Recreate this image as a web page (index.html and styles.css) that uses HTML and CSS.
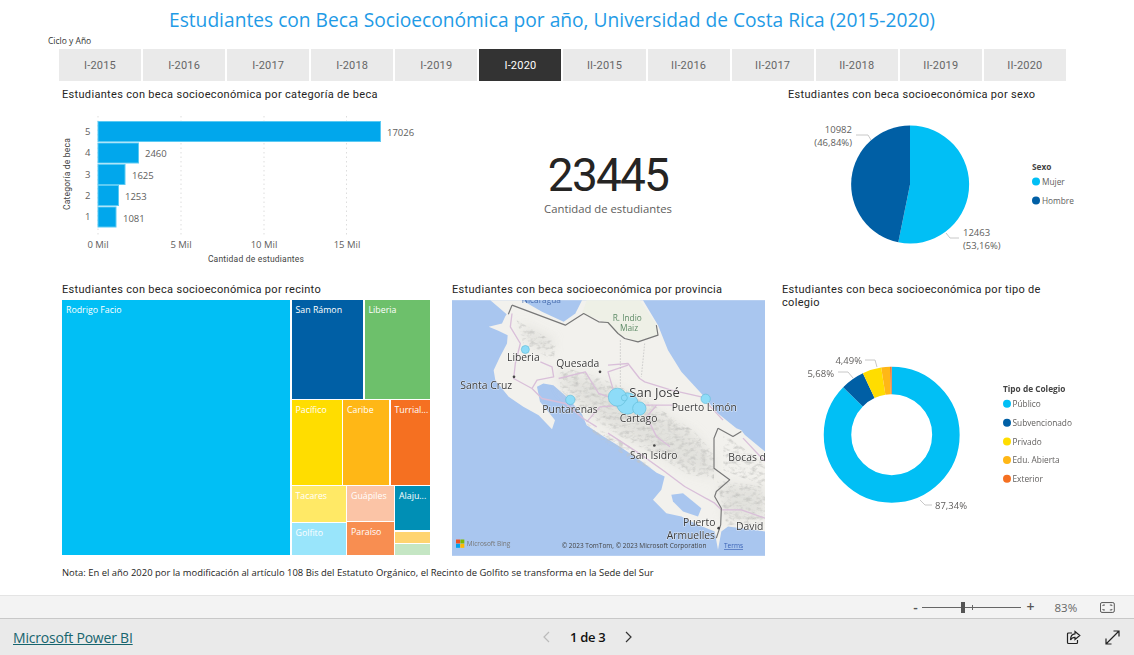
FILE: index.html
```html
<!DOCTYPE html>
<html lang="es">
<head>
<meta charset="utf-8">
<title>Estudiantes con Beca Socioeconómica</title>
<link rel="stylesheet" href="styles.css">
</head>
<body>
<main class="report">
  <h1 class="report-title">Estudiantes con Beca Socioeconómica por año, Universidad de Costa Rica (2015-2020)</h1>
  <div class="slicer-label">Ciclo y Año</div>
  <div class="slicer">
    <div class="chip">I-2015</div><div class="chip">I-2016</div><div class="chip">I-2017</div><div class="chip">I-2018</div><div class="chip">I-2019</div><div class="chip active">I-2020</div>
    <div class="chip">II-2015</div><div class="chip">II-2016</div><div class="chip">II-2017</div><div class="chip">II-2018</div><div class="chip">II-2019</div><div class="chip">II-2020</div>
  </div>

  <section class="row row-top">
    <div class="panel bars">
      <h2 class="visual-title">Estudiantes con beca socioeconómica por categoría de beca</h2>
      <svg class="chart" width="440" height="165" viewBox="62 105 440 165">
        <g class="grid"><line x1="98" y1="115" x2="98" y2="235"/><line x1="181" y1="115" x2="181" y2="235"/><line x1="264" y1="115" x2="264" y2="235"/><line x1="346.500" y1="115" x2="346.500" y2="235"/></g>
        <g class="bar">
          <rect x="98" y="120.500" width="282.500" height="20"/>
          <rect x="98" y="142" width="40.500" height="20"/>
          <rect x="98" y="163.500" width="27" height="20"/>
          <rect x="98" y="184.500" width="20.500" height="20"/>
          <rect x="98" y="206" width="18" height="20"/>
        </g>
        <g class="t-axis">
          <text x="387" y="135">17026</text><text x="145" y="156">2460</text><text x="132" y="178">1625</text><text x="125" y="199">1253</text><text x="123" y="221">1081</text>
          <text x="85" y="134">5</text><text x="85" y="155">4</text><text x="85" y="177">3</text><text x="85" y="198">2</text><text x="85" y="219">1</text>
        </g>
        <g class="t-axis t-mid"><text x="98" y="247">0 Mil</text><text x="181" y="247">5 Mil</text><text x="264" y="247">10 Mil</text><text x="347" y="247">15 Mil</text></g>
        <text class="t-axis-title t-mid" x="256" y="261">Cantidad de estudiantes</text>
        <text class="t-axis-title t-mid" transform="translate(70 173) rotate(-90)">Categoría de beca</text>
      </svg>
    </div>
    <div class="kpi">
      <div class="kpi-value">23445</div>
      <div class="kpi-label">Cantidad de estudiantes</div>
    </div>
    <div class="panel sex">
      <h2 class="visual-title">Estudiantes con beca socioeconómica por sexo</h2>
      <svg class="chart" width="302" height="165" viewBox="788 105 302 165">
        <path class="c-blue" d="M910 184.500V125.500A59 59 0 1 1 898.300 242.300Z"/>
        <path class="c-navy" d="M910 184.500L898.300 242.300A59 59 0 0 1 910 125.500Z"/>
        <polyline class="leader" points="856,135 868,135 871,140"/>
        <polyline class="leader" points="946,233 950,238 959,238"/>
        <g class="t-axis">
          <text class="t-end" x="852" y="133">10982</text><text class="t-end" x="852" y="146">(46,84%)</text>
          <text x="963" y="236">12463</text><text x="963" y="249">(53,16%)</text>
        </g>
        <g class="t-legend">
          <text class="t-legend-title" x="1032" y="170">Sexo</text>
          <circle class="c-blue" cx="1036" cy="181.500" r="4"/><text x="1042" y="185">Mujer</text>
          <circle class="c-navy" cx="1036" cy="200.500" r="4"/><text x="1042" y="204">Hombre</text>
        </g>
      </svg>
    </div>
  </section>

  <section class="row row-bottom">
    <div class="panel tm-panel">
      <h2 class="visual-title">Estudiantes con beca socioeconómica por recinto</h2>
      <div class="treemap">
        <div class="cell big c1">Rodrigo Facio</div>
        <div class="tm-right">
          <div class="tm-row r1"><div class="cell w-san c2">San Rámon</div><div class="cell grow c3">Liberia</div></div>
          <div class="tm-row r2"><div class="cell w-pac c4">Pacífico</div><div class="cell w-car c5">Caribe</div><div class="cell grow c6">Turrial...</div></div>
          <div class="tm-row r3">
            <div class="tm-col w-tac"><div class="cell h-tac c7">Tacares</div><div class="cell grow c8">Golfito</div></div>
            <div class="tm-col w-gua"><div class="cell h-gua c9">Guápiles</div><div class="cell grow c10">Paraíso</div></div>
            <div class="tm-col grow"><div class="cell h-ala c11">Alaju...</div><div class="cell h-sm c12"></div><div class="cell grow c13"></div></div>
          </div>
        </div>
      </div>
    </div>
    <div class="panel map-panel">
      <h2 class="visual-title">Estudiantes con beca socioeconómica por provincia</h2>
      <svg class="map" width="313" height="256" viewBox="36 30 939 767">
        <defs>
          <filter id="shade" x="0" y="0" width="100%" height="100%">
            <feTurbulence type="fractalNoise" baseFrequency="0.06 0.09" numOctaves="4" seed="11" result="n"/>
            <feColorMatrix in="n" type="matrix" values="0 0 0 0 .55  0 0 0 0 .55  0 0 0 0 .53  2 0 0 0 -.9" result="g"/>
            <feComposite in="g" in2="SourceAlpha" operator="in" result="c"/>
            <feGaussianBlur in="c" stdDeviation="1.800"/>
          </filter>
          <filter id="soft"><feGaussianBlur stdDeviation="16"/></filter>
          <filter id="edge"><feGaussianBlur stdDeviation="6"/></filter>
        </defs>
        <rect class="sea" x="36" y="30" width="939" height="767"/>
        <path class="land" d="M151 30L180 55 200 72 196 78 186 100 146 110 175 122 203 135 201 160 180 200 161 240 166 270 206 320 250 350 296 375 336 417 345 390 325 365 300 335 291 290 310 280 340 285 380 320 425 370 440 405 480 432 540 470 600 510 650 548 674 559 664 599 639 629 679 669 724 679 774 704 824 724 834 779 844 724 864 709 975 724V484L914 434 904 420 889 414 834 370 784 310 724 245 684 180 654 105 609 30Z"/>
        <path class="sea" d="M246 30L306 65 371 95 406 70 426 30Z"/>
        <path class="sea" d="M694 614L729 609 784 654 774 679 729 664 699 634Z"/>
        <path class="nature" d="M510 30H600L650 105 654 135 594 155 534 130 500 97 470 85 426 70 440 30Z"/>
        <g class="hills" filter="url(#soft)">
          <path d="M350 240L440 260 520 290 600 330 680 380 760 430 820 500 820 560 740 540 640 480 560 440 480 390 420 340 370 290Z"/>
          <path d="M835 580L975 590V680L860 690Z"/>
          <path d="M240 100L340 150 330 190 260 150Z"/>
        </g>
        <g filter="url(#shade)">
          <path d="M360 230L440 250 520 280 600 320 680 370 760 420 822 490 822 570 740 550 640 490 560 450 480 400 420 350 360 300Z"/>
          <path d="M830 570L975 590V700L860 705Z"/>
          <path d="M230 90L350 160 340 210 250 160Z"/>
          <path d="M440 400L560 460 640 540 560 500 470 440Z"/>
          <path d="M850 430L975 520V590L850 540Z"/>
        </g>
        <g class="roads">
          <polyline points="216,70 211,110 241,160 226,220 221,265 276,295 306,325 376,340 430,385 470,410"/>
          <polyline points="301,215 336,230 341,260 291,270 276,295"/>
          <polyline points="356,265 436,245 476,310 506,320"/>
          <polyline points="504,225 564,220 599,265 614,275 694,300 784,320 849,390"/>
          <polyline points="564,225 504,245 520,300"/>
          <polyline points="504,429 604,494 674,544 734,589 824,639 844,659 904,659 975,684"/>
          <polyline points="909,444 975,514"/>
          <polyline points="650,345 620,380 650,440 690,470"/>
          <polyline points="440,395 480,350 550,345 640,345 700,345"/>
        </g>
        <polyline class="dash" points="541,150 541,300"/>
        <polyline class="dash" points="614,160 604,260"/>
        <polyline class="border" points="216,45 376,105 431,70 476,95 504,97 534,130 554,145 594,155 654,135 649,105"/>
        <polyline class="border" points="216,45 205,72"/>
        <polyline class="border" points="834,414 879,439 904,424"/>
        <polyline class="border" points="834,414 822,444 822,534 869,569 829,604 824,619 844,654 842,704 829,744"/>
        <g class="dots"><circle cx="222" cy="260" r="4"/><circle cx="480" cy="245" r="4"/><circle cx="643" cy="466" r="4"/><circle cx="836" cy="714" r="4"/></g>
        <g class="bubbles">
          <circle cx="256" cy="178" r="12"/><circle cx="391" cy="329" r="14"/><circle cx="797" cy="326" r="14"/>
          <circle cx="562" cy="340" r="32"/><circle cx="532" cy="321" r="27"/><circle cx="598" cy="355" r="20"/><circle cx="553" cy="323" r="9"/>
        </g>
        <g class="place">
          <text x="201" y="214">Liberia</text><text x="349" y="231">Quesada</text><text x="61" y="297">Santa Cruz</text>
          <text x="307" y="369">Puntarenas</text><text class="place-lg" x="568" y="322">San José</text><text x="695" y="364">Puerto Limón</text>
          <text x="539" y="395">Cartago</text><text x="570" y="508">San Isidro</text><text x="865" y="512">Bocas del</text>
          <text x="729" y="708">Puerto</text><text x="680" y="746">Armuelles</text><text x="888" y="721">David</text>
        </g>
        <text class="place-green" x="518" y="92">R. Indio</text><text class="place-green" x="540" y="122">Maiz</text>
        <text class="place-blue" x="245" y="40">Nicaragua</text>
        <g><rect class="ms-r" x="48" y="748" width="12" height="12"/><rect class="ms-g" x="61" y="748" width="12" height="12"/><rect class="ms-b" x="48" y="761" width="12" height="12"/><rect class="ms-y" x="61" y="761" width="12" height="12"/></g>
        <text class="attr" x="80" y="767">Microsoft Bing</text>
        <text class="attr attr-dark" x="365" y="774">© 2023 TomTom, © 2023 Microsoft Corporation</text>
        <text class="attr attr-link" x="852" y="774">Terms</text>
      </svg>
    </div>
    <div class="panel school">
      <h2 class="visual-title">Estudiantes con beca socioeconómica por tipo de colegio</h2>
      <svg class="chart" width="310" height="245" viewBox="782 311 310 245">
        <g class="donut">
          <circle class="d1" cx="891.700" cy="434.700" r="54.200" pathLength="100" stroke-dasharray="87.340 100"/>
          <circle class="d2" cx="891.700" cy="434.700" r="54.200" pathLength="100" stroke-dasharray="5.680 100" stroke-dashoffset="-87.340"/>
          <circle class="d3" cx="891.700" cy="434.700" r="54.200" pathLength="100" stroke-dasharray="4.490 100" stroke-dashoffset="-93.020"/>
          <circle class="d4" cx="891.700" cy="434.700" r="54.200" pathLength="100" stroke-dasharray="2.090 100" stroke-dashoffset="-97.510"/>
          <circle class="d5" cx="891.700" cy="434.700" r="54.200" pathLength="100" stroke-dasharray="0.400 100" stroke-dashoffset="-99.600"/>
        </g>
        <polyline class="leader" points="865,360 875,360 877,367"/>
        <polyline class="leader" points="838,372 848,372 853,378"/>
        <polyline class="leader" points="920,500 925,505 932,505"/>
        <g class="t-axis">
          <text class="t-end" x="862" y="364">4,49%</text><text class="t-end" x="834" y="377">5,68%</text><text x="935" y="509">87,34%</text>
        </g>
        <g class="t-legend">
          <text class="t-legend-title" x="1003" y="392">Tipo de Colegio</text>
          <circle class="c-blue" cx="1007" cy="403.700" r="4"/><text x="1012.500" y="407">Público</text>
          <circle class="c-navy" cx="1007" cy="422.700" r="4"/><text x="1012.500" y="426">Subvencionado</text>
          <circle class="c-yellow" cx="1007" cy="441.500" r="4"/><text x="1012.500" y="445">Privado</text>
          <circle class="c-amber" cx="1007" cy="460" r="4"/><text x="1012.500" y="463">Edu. Abierta</text>
          <circle class="c-orange" cx="1007" cy="478.800" r="4"/><text x="1012.500" y="482">Exterior</text>
        </g>
      </svg>
    </div>
  </section>
  <p class="note">Nota: En el año 2020 por la modificación al artículo 108 Bis del Estatuto Orgánico, el Recinto de Golfito se transforma en la Sede del Sur</p>
</main>

<div class="zoombar">
  <span class="zoom-sign">-</span>
  <div class="slider"><span class="tick"></span><span class="thumb"></span></div>
  <span class="zoom-sign">+</span>
  <span class="zoom-pct">83%</span>
  <svg class="fit" width="15" height="11" viewBox="0 0 15 11"><rect x=".5" y=".5" width="14" height="10" rx="1.500"/><path d="M3 4V3H5M10 3H12V4M12 7V8H10M5 8H3V7"/></svg>
</div>
<footer class="footer">
  <a class="brand" href="#">Microsoft Power BI</a>
  <div class="pager">
    <svg class="chev off" width="8" height="12" viewBox="0 0 8 12"><path d="M7 1L2 6 7 11"/></svg>
    <span class="page">1 de 3</span>
    <svg class="chev" width="8" height="12" viewBox="0 0 8 12"><path d="M1 1L6 6 1 11"/></svg>
  </div>
  <div class="actions">
    <svg class="act" width="15" height="15" viewBox="0 0 15 15"><path d="M6 3H2.500A1 1 0 0 0 1.500 4V12.500A1 1 0 0 0 2.500 13.500H10.500A1 1 0 0 0 11.500 12.500V10"/><path d="M9 1.500L13.800 5.500 9 9.500V7.300C7 7.300 5.500 8 4.500 10 4.500 7 6 4 9 3.800Z"/></svg>
    <svg class="act" width="15" height="15" viewBox="0 0 15 15"><path d="M1 14L14 1M8.500 1H14V6.500M1 8.500V14H6.500"/></svg>
  </div>
</footer>
</body>
</html>
```
FILE: styles.css
```css
* { box-sizing: border-box; }
html, body { margin: 0; height: 655px; overflow: hidden; background: #fff; }
body { font-family: "Open Sans", "Noto Sans", sans-serif; color: #252423; }

.report { height: 595px; padding-top: 6px; }
.report-title { margin: 0; font-size: 19.200px; line-height: 27px; font-weight: 400; text-align: center; padding-right: 30px; color: #1f9be6; white-space: nowrap; }
.slicer-label { margin: 3px 0 0 48px; font-size: 8.500px; line-height: 10px; color: #333; }
.slicer { display: grid; grid-template-columns: repeat(12, 82.080px); column-gap: 2px; margin: 3px 0 0 59px; }
.chip { height: 32px; display: flex; align-items: center; justify-content: center; background: #eaeaea; color: #666; font: 11px "Roboto", sans-serif; letter-spacing: .2px; }
.chip.active { background: #333; color: #fff; }

.row { display: flex; padding-left: 62px; }
.row-top { height: 199px; padding-top: 7px; }
.row-bottom { margin-top: 3px; }
.panel { display: flex; flex-direction: column; min-width: 0; }
.visual-title { margin: 0; font: 400 11px/13px "Roboto", sans-serif; letter-spacing: .32px; color: #252423; }
.chart { display: block; }

.bars { width: 440px; }
.bars .chart { margin-top: 5px; }
.kpi { width: 212px; padding-top: 64px; text-align: center; }
.kpi-value { font: 400 46px/46px "Roboto", sans-serif; letter-spacing: -1.800px; color: #252423; }
.kpi-label { margin-top: 3px; font-size: 11.300px; line-height: 16px; color: #605e5d; }
.sex { width: 302px; margin-left: 74px; }
.sex .chart { margin-top: 4px; }

.tm-panel { width: 367.500px; }
.map-panel { width: 313px; margin-left: 22.500px; }
.school { width: 310px; margin-left: 17px; }
.school .visual-title { width: 290px; }
.tm-panel .visual-title, .map-panel .visual-title { margin-bottom: 4px; }
.school .chart { margin-top: 2px; }
.map { display: block; }

.treemap { display: flex; gap: 1.500px; height: 255px; }
.tm-right { flex: 1; display: flex; flex-direction: column; gap: 1.500px; min-width: 0; }
.tm-row { display: flex; gap: 1.500px; }
.r1 { height: 98.500px; }
.r2 { height: 84.500px; }
.r3 { flex: 1; min-height: 0; }
.tm-col { display: flex; flex-direction: column; gap: 1.500px; }
.cell { padding: 4px 4px; font-size: 8.800px; line-height: 12px; color: #fff; overflow: hidden; white-space: nowrap; }
.big { width: 228px; }
.grow { flex: 1; min-width: 0; min-height: 0; }
.w-san { width: 71.500px; }
.w-pac { width: 50px; }
.w-car { width: 46px; }
.w-tac { width: 54px; }
.w-gua { width: 46.500px; }
.h-tac { height: 35.500px; }
.h-gua { height: 34.500px; }
.h-ala { height: 44px; }
.h-sm { height: 11px; }
.c1 { background: #01bff5; }
.c2 { background: #005fa5; }
.c3 { background: #6dc06b; }
.c4 { background: #ffdd00; }
.c5 { background: #ffb716; }
.c6 { background: #f57021; }
.c7 { background: #ffe966; }
.c8 { background: #99e5fb; }
.c9 { background: #fbc4a6; }
.c10 { background: #f88e51; }
.c11 { background: #008fb5; }
.c12 { background: #ffd470; }
.c13 { background: #c5e6c4; }

.note { margin: 10px 0 0 62px; font-size: 9.430px; line-height: 14px; color: #252423; white-space: nowrap; }

/* chart parts */
.grid line { stroke: #ddd; stroke-width: 1; stroke-dasharray: 1.500 3; }
.bar rect { fill: #01a7ec; stroke: #5ccaf3; stroke-width: 1; }
.t-axis text { font-size: 9.500px; fill: #605e5d; }
.t-legend text { font-size: 8.300px; fill: #605e5d; }
.t-legend .t-legend-title { font-size: 8.300px; font-weight: 700; fill: #444; }
.t-axis-title { font-size: 8.500px; fill: #444; font-family: "Roboto", sans-serif; letter-spacing: .2px; }
.t-mid text, text.t-mid { text-anchor: middle; }
.t-axis text.t-end { text-anchor: end; }
.c-blue { fill: #01bff5; }
.c-navy { fill: #005fa5; }
.c-yellow { fill: #ffdd00; }
.c-amber { fill: #ffb716; }
.c-orange { fill: #f57021; }
.leader { fill: none; stroke: #c8c8c8; stroke-width: 1; }
.donut circle { fill: none; stroke-width: 27.500; transform: rotate(-90deg); transform-origin: 891.700px 434.700px; }
.d1 { stroke: #01bff5; }
.d2 { stroke: #005fa5; }
.d3 { stroke: #ffdd00; }
.d4 { stroke: #ffb716; }
.d5 { stroke: #f57021; }

/* map */
.sea { fill: #a9c6ef; }
.land { fill: #f2f1ed; }
.nature { fill: #eef0e6; }
.hills path { fill: #d6d5d0; opacity: .55; }
.roads polyline { fill: none; stroke: #d9bfd9; stroke-width: 4; stroke-linejoin: round; }
.dash { fill: none; stroke: #bcbcbc; stroke-width: 2; stroke-dasharray: 5 4; }
.border { fill: none; stroke: #777; stroke-width: 3.500; stroke-linejoin: round; }
.dots circle { fill: #444; }
.bubbles circle { fill: #8edcf8; stroke: #62bcd8; stroke-width: 2; }
.place text { font-size: 31px; fill: #3c3c3c; stroke: #fff; stroke-width: 3px; paint-order: stroke; stroke-opacity: .6; }
.place .place-lg { font-size: 39px; }
.place-green { font-size: 25px; fill: #5d8a66; }
.place-blue { font-size: 25px; fill: #4a6fb0; }
.attr { font-size: 19.500px; fill: #777; }
.attr-dark { fill: #444; }
.attr-link { fill: #3a62b5; text-decoration: underline; }
.ms-r { fill: #f25022; }
.ms-g { fill: #7fba00; }
.ms-b { fill: #00a4ef; }
.ms-y { fill: #ffb900; }

/* zoom bar */
.zoombar { height: 24px; display: flex; align-items: center; padding: 0 19px 0 912px; background: #f3f3f3; border-top: 1px solid #e4e4e4; border-bottom: 1px solid #c8c8c8; color: #555; }
.zoom-sign { width: 7px; font-size: 14px; line-height: 20px; font-weight: 600; text-align: center; }
.slider { position: relative; width: 100px; height: 1px; margin: 0 6px 0 3px; background: #666; }
.thumb { position: absolute; left: 39px; top: -5px; width: 4px; height: 11px; background: #555; }
.tick { position: absolute; left: 50px; top: -2px; width: 1px; height: 5px; background: #666; }
.zoom-pct { margin-left: 21px; font-size: 11.500px; color: #666; }
.fit { margin-left: 23px; }
.fit rect, .fit path { fill: none; stroke: #555; stroke-width: 1; }

/* footer */
.footer { height: 36px; display: flex; align-items: center; background: #eaeaea; padding: 0 13px; }
.brand { width: 529px; font-size: 14px; color: #17656e; text-decoration: underline; font-weight: 400; letter-spacing: -.2px; }
.pager { display: flex; align-items: center; gap: 20px; font-size: 13px; }
.page { font-weight: 600; color: #111; letter-spacing: -.3px; }
.chev path { fill: none; stroke: #333; stroke-width: 1.200; }
.chev.off path { stroke: #bbb; }
.actions { display: flex; gap: 24px; margin-left: 433px; }
.act path { fill: none; stroke: #222; stroke-width: 1.200; }
```
